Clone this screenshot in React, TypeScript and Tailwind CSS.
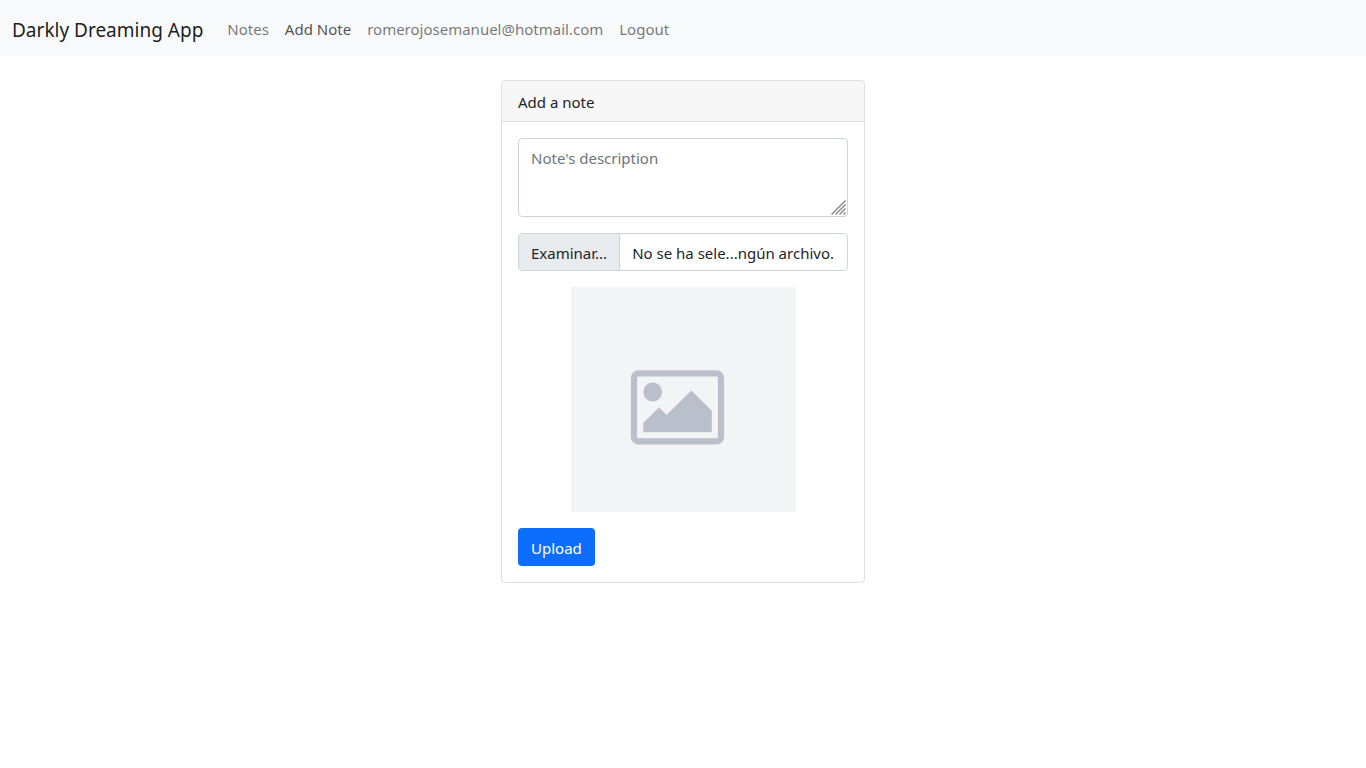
import { useState } from "react";

const links = [
  { label: "Notes", href: "#notes", active: false },
  { label: "Add Note", href: "#add-note", active: true },
  { label: "romerojosemanuel@hotmail.com", href: "#profile", active: false },
  { label: "Logout", href: "#logout", active: false },
];

function Navbar() {
  return (
    <nav className="flex min-h-14 flex-wrap items-center bg-[#f8f9fa] px-3 pt-0.5">
      <a href="#home" className="mr-4 pt-0.5 text-[19px] leading-[30px] text-black/90">
        Darkly Dreaming App
      </a>
      <ul className="flex flex-wrap">
        {links.map((link) => (
          <li key={link.label}>
            <a
              href={link.href}
              aria-current={link.active ? "page" : undefined}
              className={
                link.active
                  ? "block px-2 py-2 text-black/70"
                  : "block px-2 py-2 text-black/55 hover:text-black/70"
              }
            >
              {link.label}
            </a>
          </li>
        ))}
      </ul>
    </nav>
  );
}

function PlaceholderImage() {
  return (
    <svg
      role="img"
      aria-label="Preview"
      viewBox="0 0 225 225"
      className="mx-auto h-[225px] w-[225px]"
    >
      <rect width="225" height="225" fill="#f3f4f6" />
      <rect x="63" y="86.4" width="87" height="68" rx="4.5" fill="none" stroke="#babfcb" strokeWidth="6.2" />
      <circle cx="81.7" cy="105" r="9.4" fill="#babfcb" />
      <path d="M72.3 145.2v-9.4L88 120.4l7.7 7.7 24.6-24.7 20.5 20.4v21.4z" fill="#babfcb" />
    </svg>
  );
}

function ResizeGrip() {
  return (
    <svg
      aria-hidden="true"
      viewBox="0 0 15 15"
      className="pointer-events-none absolute right-0.5 bottom-0.5 h-[15px] w-[15px]"
      fill="none"
      stroke="#808080"
      strokeWidth="1.3"
    >
      <path d="M0.5 14.5L14.5 0.5M4.5 14.5L14.5 4.5M8.5 14.5L14.5 8.5M12.5 14.5L14.5 12.5" />
    </svg>
  );
}

export default function App() {
  const [fileName, setFileName] = useState("No se ha sele...ngún archivo.");

  return (
    <div className="min-h-screen bg-white font-['Noto_Sans','Open_Sans',sans-serif] text-[15px] leading-6 text-[#212529]">
      <Navbar />
      <main className="px-3 py-6">
        <section className="mx-auto w-full max-w-[364px] rounded border border-[#dfdfdf]">
          <h1 className="rounded-t border-b border-[#dfdfdf] bg-[#f7f7f7] px-4 pt-[9px] pb-[7px]">Add a note</h1>
          <form className="flex flex-col gap-4 p-4" onSubmit={(e) => e.preventDefault()}>
            <div className="relative flex">
              <textarea
                aria-label="Note's description"
                placeholder="Note's description"
                className="h-[79px] w-full resize-none rounded border border-[#ced4da] px-3 py-[7px] placeholder:text-[#6c757d]"
              />
              <ResizeGrip />
            </div>
            <label className="relative flex h-[38px] cursor-pointer overflow-hidden rounded border border-[#ced4da] focus-within:border-[#86b7fe]">
              <input
                type="file"
                accept="image/*"
                className="sr-only"
                onChange={(e) => {
                  const file = e.target.files?.[0];
                  if (file) setFileName(file.name);
                }}
              />
              <span className="border-r border-[#ced4da] bg-[#e9ecef] px-3 py-[7px]">Examinar...</span>
              <span className="truncate px-3 py-[7px]">{fileName}</span>
            </label>
            <PlaceholderImage />
            <button
              type="submit"
              className="h-[38px] cursor-pointer self-start rounded bg-[#0d6efd] px-[13px] pt-0.5 text-white hover:bg-[#0b5ed7]"
            >
              Upload
            </button>
          </form>
        </section>
      </main>
    </div>
  );
}
